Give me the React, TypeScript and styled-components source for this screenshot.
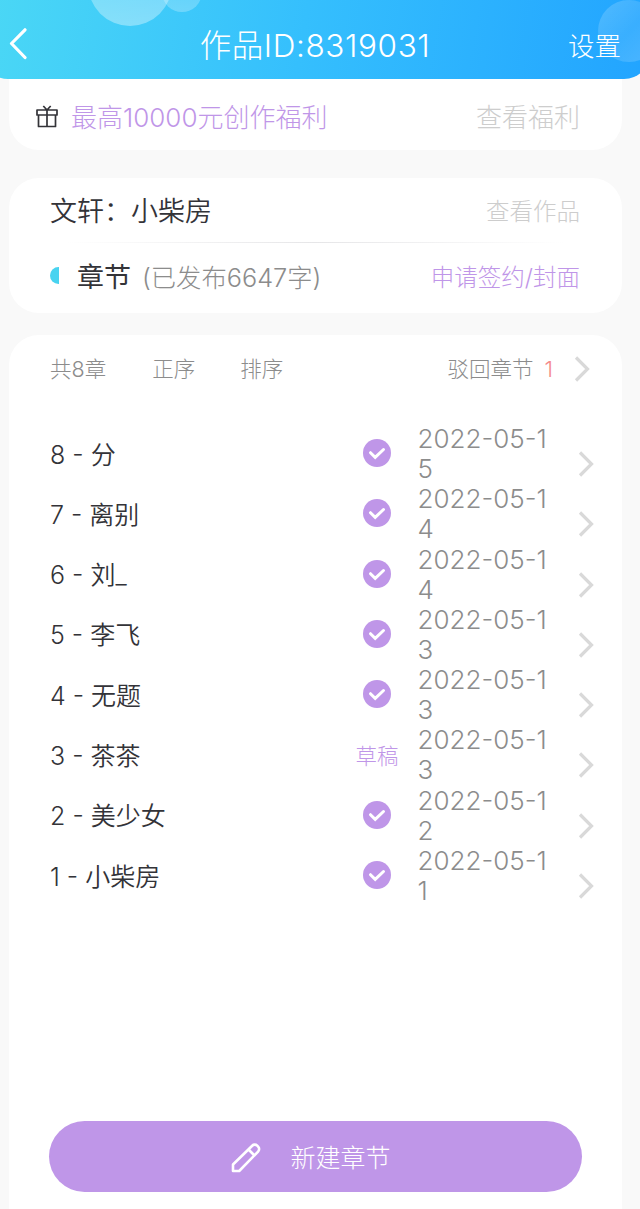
import React from "react";
import styled, { createGlobalStyle } from "styled-components";

const GlobalStyle = createGlobalStyle`
  * { box-sizing: border-box; }
  html { background: #f9f9f9; }
  body {
    margin: 0;
    overflow: hidden;
    font-family: Inter, "Noto Sans CJK SC", sans-serif;
    font-weight: 300;
    color: #333338;
  }
  button {
    font: inherit;
    color: inherit;
    background: none;
    border: 0;
    padding: 0;
  }
`;

const Page = styled.div`
  width: 640px;
  height: 1209px;
  display: flex;
  flex-direction: column;
  overflow: hidden;
`;

const Header = styled.header`
  position: relative;
  z-index: 1;
  flex: none;
  height: 79px;
  margin: 0 -10px 0 -18px;
  padding: 12px 29px 0 27px;
  display: grid;
  grid-template-columns: 80px 1fr 80px;
  align-items: center;
  color: #fff;
  border-radius: 0 0 26px 26px;
  overflow: hidden;
  background: linear-gradient(100deg, #4bd8f5 0%, #35bffd 48%, #22a4ff 100%);
`;

const Bubbles = styled.svg`
  position: absolute;
  left: 18px;
  top: 0;
`;

const BackButton = styled.button`
  position: relative;
  display: flex;
  padding-bottom: 4px;
`;

const Title = styled.h1`
  position: relative;
  margin: 0;
  font-size: 31.5px;
  line-height: 40px;
  font-weight: 300;
  letter-spacing: 0.6px;
  text-align: center;
  white-space: nowrap;
`;

const HeaderAction = styled.button`
  position: relative;
  justify-self: end;
  font-size: 26.5px;
  line-height: 34px;
`;

const Card = styled.section<{ $pad: string; $gap?: number; $radius?: string }>`
  flex: none;
  margin: ${(p) => p.$gap ?? 0}px 18px 0 9px;
  padding: ${(p) => p.$pad};
  border-radius: ${(p) => p.$radius ?? "30px"};
  background: #fff;
`;

const Chapters = styled(Card)`
  flex: 1;
  display: flex;
  flex-direction: column;
`;

const Line = styled.div<{ $height: number; $drop?: number }>`
  display: flex;
  align-items: center;
  height: ${(p) => p.$height}px;
  padding-top: ${(p) => p.$drop ?? 0}px;
  white-space: nowrap;
`;

const Label = styled.span<{
  $size: number;
  $color?: string;
  $left?: number;
  $weight?: number;
}>`
  font-size: ${(p) => p.$size}px;
  line-height: 34px;
  color: ${(p) => p.$color ?? "#333338"};
  margin-left: ${(p) => p.$left ?? 0}px;
  font-weight: ${(p) => p.$weight ?? 300};
`;

const Spacer = styled.div`
  flex: 1;
`;

const Divider = styled.div`
  height: 1px;
  margin: 0 16px;
  background: linear-gradient(90deg, transparent, #e6e6e8 50%, transparent);
`;

const HalfDot = styled.i`
  width: 9px;
  height: 17px;
  margin-bottom: 6px;
  border-radius: 9px 0 0 9px;
  background: #48d3f0;
`;

const GiftIcon = styled.svg`
  margin-bottom: 3px;
`;

const List = styled.ul`
  list-style: none;
  margin: 23px 0 0;
  padding: 0;
`;

const Row = styled.li`
  display: grid;
  grid-template-columns: 292px 70px 147px 1fr;
  align-items: center;
  height: 60.3px;
`;

const Name = styled.span`
  font-size: 25px;
  line-height: 34px;
  font-weight: 350;
  font-feature-settings: "case";
  white-space: pre;
`;

const Status = styled.span<{ $draft?: boolean }>`
  display: flex;
  justify-content: center;
  padding-bottom: ${(p) => (p.$draft ? 0 : 3)}px;
  font-size: 21.5px;
  line-height: 28px;
  color: #bf96e8;
`;

const DateText = styled.time`
  width: 134px;
  margin: 0 0 1px 5.5px;
  font-size: 26px;
  line-height: 30px;
  color: #8c8c8c;
  font-feature-settings: "case";
  word-break: break-all;
`;

const RowArrow = styled.span`
  display: flex;
  padding: 19px 0 0 19px;
`;

const MoreArrow = styled.span`
  display: flex;
  margin: 0 -9px 0 21px;
`;

const NewButton = styled.button`
  display: flex;
  align-items: center;
  justify-content: center;
  gap: 29px;
  height: 71px;
  margin: auto 0 17px -1px;
  padding: 2px 9px 0 0;
  border-radius: 36px;
  background: #bf96e8;
  color: #fff;
  font-size: 25px;
  line-height: 34px;
`;

const Arrow = () => (
  <svg width="17" height="26" viewBox="0 0 17 26" fill="none" stroke="#d9d9d9" strokeWidth="3.2">
    <path d="M2 1.5 13.5 13 2 24.5" />
  </svg>
);

const Check = () => (
  <svg width="28" height="28" viewBox="0 0 28 28" fill="none">
    <circle cx="14" cy="14" r="14" fill="#bf96e8" />
    <path d="m7.5 13.7 4.7 4.7 8.3-7.9" stroke="#fff" strokeWidth="3" strokeLinecap="round" />
  </svg>
);

const Gift = () => (
  <GiftIcon width="22" height="23" viewBox="0 0 22 23" fill="none" stroke="#333338" strokeWidth="1.7" strokeLinejoin="round">
    <path d="M1 5h20v5H1zM2.5 10v11.5h17V10M11 5v16.5M7.3 1 11 5l3.7-4" />
  </GiftIcon>
);

const Pencil = () => (
  <svg width="30" height="30" viewBox="0 0 30 30" fill="none" stroke="#fff" strokeWidth="2.6" strokeLinejoin="round">
    <path d="M2 28v-6.5L21.2 2.7a3.5 3.5 0 0 1 5 0l.9.9a3.5 3.5 0 0 1 0 5L8.2 28zM17.5 6.5l6 6" />
  </svg>
);

const chapters = [
  { name: "8 - 分", date: "2022-05-15" },
  { name: "7 - 离别", date: "2022-05-14" },
  { name: "6 - 刘_", date: "2022-05-14" },
  { name: "5 - 李飞", date: "2022-05-13" },
  { name: "4 - 无题", date: "2022-05-13" },
  { name: "3 - 茶茶", date: "2022-05-13", draft: true },
  { name: "2 - 美少女", date: "2022-05-12" },
  { name: "1 - 小柴房", date: "2022-05-11" },
];

export default function App() {
  return (
    <Page>
      <GlobalStyle />
      <Header>
        <Bubbles width="640" height="79">
          <defs>
            <linearGradient id="bubble" x1="0" y1="0" x2="0" y2="1">
              <stop offset="0" stopColor="#fff" stopOpacity="0.2" />
              <stop offset="1" stopColor="#fff" stopOpacity="0.36" />
            </linearGradient>
            <linearGradient id="orb" x1="0" y1="0" x2="1" y2="1">
              <stop offset="0" stopColor="#fff" stopOpacity="0.2" />
              <stop offset="0.5" stopColor="#fff" stopOpacity="0.1" />
              <stop offset="1" stopColor="#fff" stopOpacity="0.2" />
            </linearGradient>
          </defs>
          <circle cx="182" cy="-8" r="20" fill="url(#bubble)" opacity="0.7" />
          <circle cx="130" cy="-16" r="42" fill="url(#bubble)" />
          <circle cx="629" cy="31" r="31" fill="url(#orb)" />
        </Bubbles>
        <BackButton aria-label="返回">
          <svg width="18" height="32" viewBox="0 0 18 32" fill="none" stroke="#fff" strokeWidth="3.2" strokeLinecap="round" strokeLinejoin="round">
            <path d="M16 1.8 2.5 15.5 16 29.5" />
          </svg>
        </BackButton>
        <Title>作品ID:8319031</Title>
        <HeaderAction>设置</HeaderAction>
      </Header>

      <Card $pad="22px 42px 15px 27px" $radius="0 0 30px 30px">
        <Line $height={34}>
          <Gift />
          <Label $size={26} $color="#bf96e8" $left={13}>最高10000元创作福利</Label>
          <Spacer />
          <Label $size={26} $color="#cdcdcd">查看福利</Label>
        </Line>
      </Card>

      <Card $gap={28} $pad="0 42px 0 41px">
        <Line $height={64} $drop={4}>
          <Label $size={27} $weight={350}>文轩：小柴房</Label>
          <Spacer />
          <Label $size={23.5} $color="#cdcdcd">查看作品</Label>
        </Line>
        <Divider />
        <Line $height={70}>
          <HalfDot />
          <Label $size={27} $left={18} $weight={400}>章节</Label>
          <Label $size={25.3} $color="#8c8c8c" $left={11}>(已发布6647字)</Label>
          <Spacer />
          <Label $size={23.5} $color="#bf96e8">申请签约/封面</Label>
        </Line>
      </Card>

      <Chapters $gap={22} $pad="0 40px 0 41px" $radius="30px 30px 0 0">
        <Line $height={66} $drop={2}>
          <Label $size={21.5} $color="#8c8c8c">共8章</Label>
          <Label $size={21.5} $color="#8c8c8c" $left={46}>正序</Label>
          <Label $size={21.5} $color="#8c8c8c" $left={45}>排序</Label>
          <Spacer />
          <Label $size={21.5} $color="#8c8c8c">驳回章节</Label>
          <Label $size={21.5} $color="#f58a8a" $left={11}>1</Label>
          <MoreArrow><Arrow /></MoreArrow>
        </Line>
        <List>
          {chapters.map((c) => (
            <Row key={c.name}>
              <Name>{c.name}</Name>
              <Status $draft={c.draft}>{c.draft ? "草稿" : <Check />}</Status>
              <DateText>{c.date}</DateText>
              <RowArrow><Arrow /></RowArrow>
            </Row>
          ))}
        </List>
        <NewButton>
          <Pencil />
          新建章节
        </NewButton>
      </Chapters>
    </Page>
  );
}
